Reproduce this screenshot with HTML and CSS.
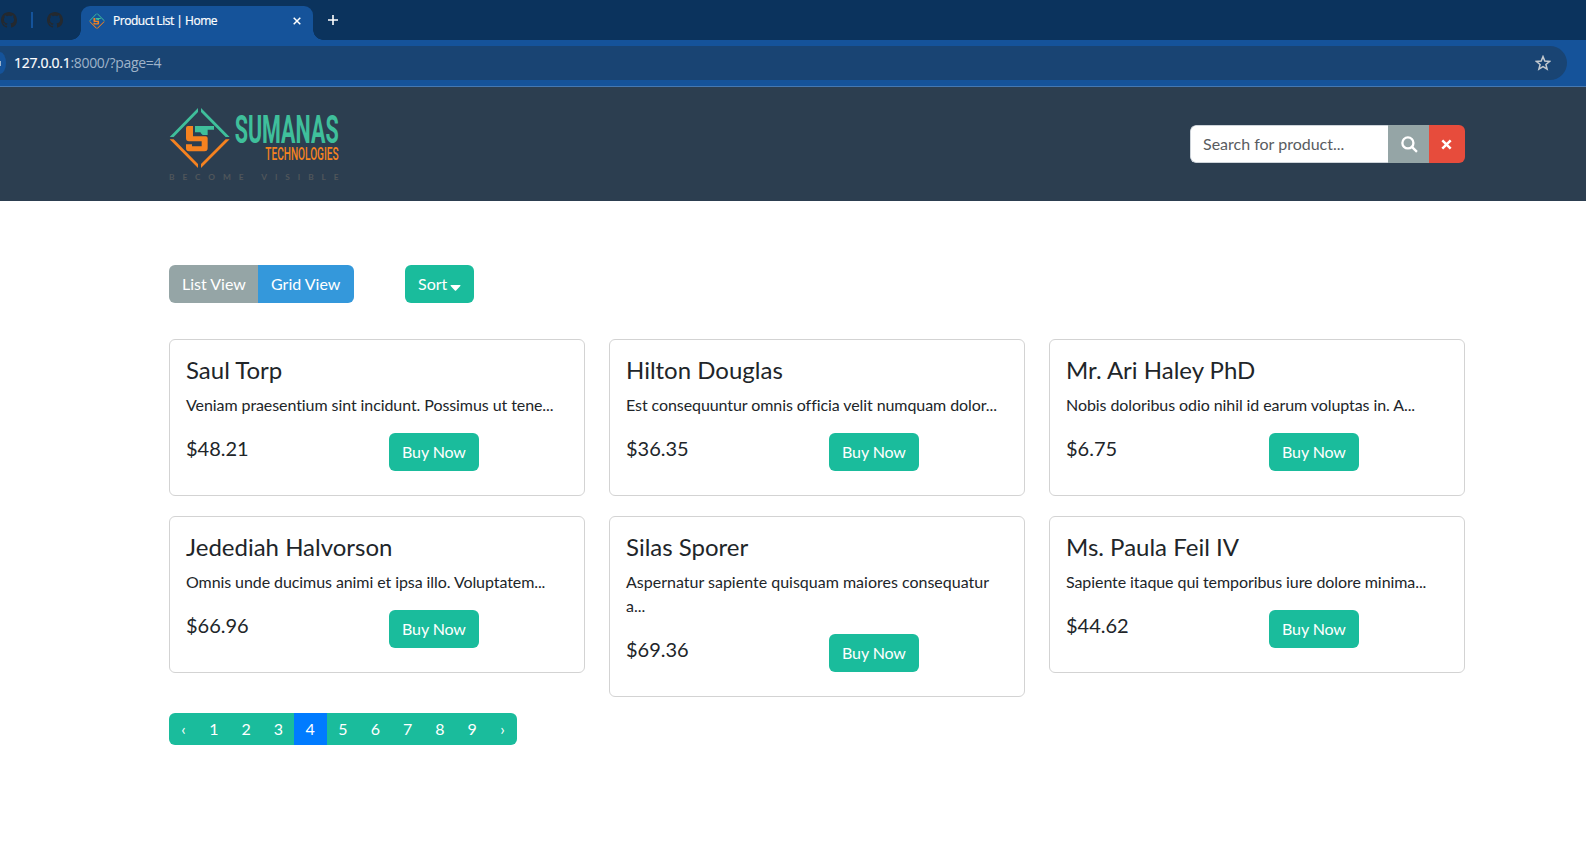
FILE: index.html
```
<!DOCTYPE html>
<html lang="en">
<head>
<meta charset="utf-8">
<title>Product List | Home</title>
<link rel="stylesheet" href="styles.css">
</head>
<body>
<svg width="0" height="0" class="defs">
  <symbol id="github" viewBox="0 0 16 16"><path d="M8 0C3.58 0 0 3.58 0 8c0 3.54 2.29 6.53 5.47 7.59.4.07.55-.17.55-.38 0-.19-.01-.82-.01-1.49-2.01.37-2.53-.49-2.69-.94-.09-.23-.48-.94-.82-1.13-.28-.15-.68-.52-.01-.53.63-.01 1.08.58 1.23.82.72 1.21 1.87.87 2.33.66.07-.52.28-.87.51-1.07-1.78-.2-3.64-.89-3.64-3.95 0-.87.31-1.59.82-2.15-.08-.2-.36-1.02.08-2.12 0 0 .67-.21 2.2.82.64-.18 1.32-.27 2-.27s1.36.09 2 .27c1.53-1.04 2.2-.82 2.2-.82.44 1.1.16 1.92.08 2.12.51.56.82 1.27.82 2.15 0 3.07-1.87 3.75-3.65 3.95.29.25.54.73.54 1.48 0 1.07-.01 1.93-.01 2.2 0 .21.15.46.55.38A8.01 8.01 0 0 0 16 8c0-4.42-3.58-8-8-8z"/></symbol>
  <symbol id="mark" viewBox="42 36 184 184">
    <path class="teal" d="M44 126 129 39v12L56 126zM138 39l86 87h-12L138 51zM120 93h57v11h-19v16h-15l-6-6v-2h-17z"/>
    <path class="orange" d="M44 133h12l73 74v12zM224 133h-12l-74 74v12zM99 93h15v31h38q6 0 6 6v30q0 9-9 9h-47q-9 0-9-9v-12h18v6h29v-15h-38q-9 0-9-9v-31q0-6 6-6z"/>
  </symbol>
</svg>

<div class="tabstrip">
  <svg class="gh gh-first"><use href="#github"/></svg>
  <span class="divider"></span>
  <svg class="gh"><use href="#github"/></svg>
  <div class="tab">
    <svg class="favicon"><use href="#mark"/></svg>
    <span class="tab-title">Product List | Home</span>
    <svg class="tab-close" viewBox="0 0 8 8"><path d="M.7.7l6.6 6.6M7.3.7.7 7.3"/></svg>
  </div>
  <svg class="new-tab" viewBox="0 0 10 10"><path d="M5 0v10M0 5h10"/></svg>
</div>
<div class="toolbar">
  <div class="omnibox">
    <span class="site-info"><i></i></span>
    <span class="url"><b>127.0.0.1</b><span>:8000/?page=4</span></span>
    <svg class="star" viewBox="0 0 16 16"><path d="M8 1.6l1.8 4.5 4.8.3-3.7 3.1 1.2 4.7L8 11.600l-4.100 2.600 1.200-4.700L1.400 6.400l4.800-.3z"/></svg>
  </div>
</div>

<header class="site-header">
  <svg class="logo" viewBox="42 30 510 237">
    <use href="#mark" x="42" y="36" width="184" height="184"/>
    <text class="brand" x="239" y="144" textLength="312" lengthAdjust="spacingAndGlyphs">SUMANAS</text>
    <text class="brand-sub" x="331" y="194" textLength="220" lengthAdjust="spacingAndGlyphs">TECHNOLOGIES</text>
    <text class="tagline" x="42" y="254" textLength="509">BECOME VISIBLE</text>
  </svg>
  <form class="search">
    <input type="text" placeholder="Search for product...">
    <button type="button" class="go"><svg viewBox="0 0 16 16"><circle cx="6.500" cy="6.500" r="5.200"/><path d="M10.500 10.500 15 15"/></svg></button>
    <button type="button" class="clear"><svg viewBox="0 0 11 11"><path d="M1.300 1.300l8.400 8.400M9.700 1.300 1.300 9.700"/></svg></button>
  </form>
</header>

<main class="container">
  <div class="controls">
    <div class="view-switch"><a class="btn list">List View</a><a class="btn grid-view">Grid View</a></div>
    <a class="btn sort">Sort <svg viewBox="0 0 10 6"><path d="M.3 0h9.400q.6.500.1 1L5.600 5.500q-.6.500-1.200 0L.2 1q-.4-.6.100-1z"/></svg></a>
  </div>
  <div class="products">
    <article class="card"><h4>Saul Torp</h4><p>Veniam praesentium sint incidunt. Possimus ut tene...</p><div class="buy"><span class="price">$48.21</span><a class="btn">Buy Now</a></div></article>
    <article class="card"><h4>Hilton Douglas</h4><p>Est consequuntur omnis officia velit numquam dolor...</p><div class="buy"><span class="price">$36.35</span><a class="btn">Buy Now</a></div></article>
    <article class="card"><h4>Mr. Ari Haley PhD</h4><p>Nobis doloribus odio nihil id earum voluptas in. A...</p><div class="buy"><span class="price">$6.75</span><a class="btn">Buy Now</a></div></article>
    <article class="card"><h4>Jedediah Halvorson</h4><p>Omnis unde ducimus animi et ipsa illo. Voluptatem...</p><div class="buy"><span class="price">$66.96</span><a class="btn">Buy Now</a></div></article>
    <article class="card two-line"><h4>Silas Sporer</h4><p>Aspernatur sapiente quisquam maiores consequatur a...</p><div class="buy"><span class="price">$69.36</span><a class="btn">Buy Now</a></div></article>
    <article class="card"><h4>Ms. Paula Feil IV</h4><p>Sapiente itaque qui temporibus iure dolore minima...</p><div class="buy"><span class="price">$44.62</span><a class="btn">Buy Now</a></div></article>
  </div>
  <nav class="pagination"><a class="arrow">‹</a><a>1</a><a>2</a><a>3</a><a class="active">4</a><a>5</a><a>6</a><a>7</a><a>8</a><a>9</a><a class="arrow">›</a></nav>
</main>
</body>
</html>
```
FILE: styles.css
```
* { box-sizing: border-box; }
body { margin: 0; background: #fff; color: #212529; font: 16px/1.5 Lato, sans-serif; height: 861px; overflow: hidden; }
.defs { position: absolute; }
.teal { fill: #3fbf9b; }
.orange { fill: #f58220; }

.tabstrip { display: flex; align-items: center; height: 40px; background: #0b335d; }
.gh { width: 16px; height: 16px; fill: #24292f; margin-left: 14px; }
.gh-first { margin-left: 1px; }
.divider { width: 2px; height: 16px; margin-left: 14px; background: #15539a; }
.tab { position: relative; align-self: flex-end; display: flex; align-items: center; width: 232px; height: 34px; margin-left: 18px; padding: 0 12px 5px 8px; border-radius: 9px 9px 0 0; background: #15539a; }
.tab::before, .tab::after { content: ""; position: absolute; bottom: 0; width: 10px; height: 10px; }
.tab::before { right: 100%; background: radial-gradient(circle at 0 0, transparent 9.500px, #15539a 10px); }
.tab::after { left: 100%; background: radial-gradient(circle at 100% 0, transparent 9.500px, #15539a 10px); }
.favicon { width: 16px; height: 16px; }
.tab-title { margin-left: 8px; font: 12px/16px "Open Sans", sans-serif; letter-spacing: -.48px; color: #fff; -webkit-text-stroke: .2px #fff; white-space: nowrap; }
.tab-close { width: 8px; height: 8px; margin-left: auto; fill: none; stroke: #fff; stroke-width: 1.500; }
.new-tab { width: 10px; height: 10px; margin-left: 15px; fill: none; stroke: #fff; stroke-width: 1.600; }

.toolbar { height: 47px; padding-top: 6px; background: #15539a; border-bottom: 1px solid #4578b2; }
.omnibox { display: flex; align-items: center; width: 1567px; height: 34px; padding-right: 16px; border-radius: 0 17px 17px 0; background: #194473; }
.site-info { display: flex; align-items: center; width: 6px; height: 22px; border-radius: 0 6px 6px 0 / 0 11px 11px 0; background: #15539a; }
.site-info i { width: 1px; height: 5px; background: #9db4cd; }
.url { margin-left: 8px; font: 14px/20px "Open Sans", sans-serif; letter-spacing: -.3px; color: #9fb3c9; }
.url b { font-weight: 400; color: #fff; -webkit-text-stroke: .2px #fff; }
.star { width: 16px; height: 16px; margin-left: auto; fill: none; stroke: #c3c9cf; stroke-width: 1.500; }

.site-header { display: flex; justify-content: space-between; align-items: flex-start; height: 114px; padding: 18px 121px 0 169px; background: #2c3e50; }
.logo { width: 170px; height: 79px; overflow: visible; }
.logo text { font-family: Roboto, sans-serif; }
.brand { fill: #3fbf9b; font-size: 116px; font-weight: 700; }
.brand-sub { fill: #f58220; font-size: 57px; font-weight: 500; }
.logo .tagline { fill: #50565b; font-size: 25px; font-family: Lato, sans-serif; font-weight: 700; }
.search { display: flex; width: 275px; height: 38px; margin-top: 20px; border-radius: 6px; overflow: hidden; }
.search input { flex: 1; min-width: 0; padding: 0 12px; border: 1px solid #ced4da; border-right: 0; border-radius: 6px 0 0 6px; font: 16px/24px Lato, sans-serif; background: #fff; }
.search input::placeholder { color: #595c5f; opacity: 1; }
.search button { display: flex; align-items: center; justify-content: center; padding: 0; border: 0; }
.search svg { fill: none; stroke: #fff; stroke-width: 2.200; }
.go { width: 41px; background: #95a5a6; }
.go svg { width: 17px; height: 17px; margin-left: 1px; }
.clear { width: 36px; background: #e74c3c; }
.clear svg { width: 11px; height: 11px; margin-right: 1px; stroke-width: 2.500; }

.container { width: 1296px; margin-left: 169px; padding-top: 64px; }
.btn { display: inline-block; height: 38px; padding: 7px 13px; border-radius: 6px; background: #1abc9c; color: #fff; white-space: nowrap; }
.controls { display: flex; gap: 51px; }
.view-switch { display: flex; }
.list { width: 89px; border-radius: 6px 0 0 6px; background: #95a5a6; }
.grid-view { width: 96px; border-radius: 0 6px 6px 0; background: #3498db; }
.sort { width: 69px; }
.sort svg { width: 11px; height: 6px; margin-left: -1px; vertical-align: -1px; fill: #fff; }
.products { display: grid; grid-template-columns: repeat(3, 416px); gap: 20px 24px; align-items: start; margin-top: 36px; }
.card { padding: 16px; border: 1px solid #d3d3d3; border-radius: 6px; }
.card h4 { margin: 0 0 8px; font-size: 24px; font-weight: 400; line-height: 28.800px; }
.card p { margin: 0 0 16px; letter-spacing: -.08px; }
.two-line p { letter-spacing: 0; }
.buy { display: grid; grid-template-columns: 203px 90px; align-items: start; height: 46px; }
.buy .btn { letter-spacing: -.1px; }
.price { font-size: 20px; line-height: 30px; }
.pagination { display: flex; width: 348px; height: 32px; margin-top: 16px; border-radius: 6px; overflow: hidden; background: #1abc9c; }
.pagination a { flex: 0 0 32.280px; color: #fff; line-height: 32px; text-align: center; }
.pagination .arrow { flex: 1; }
.pagination .active { flex-basis: 33.280px; margin-left: -1px; background: #007bff; }
```
